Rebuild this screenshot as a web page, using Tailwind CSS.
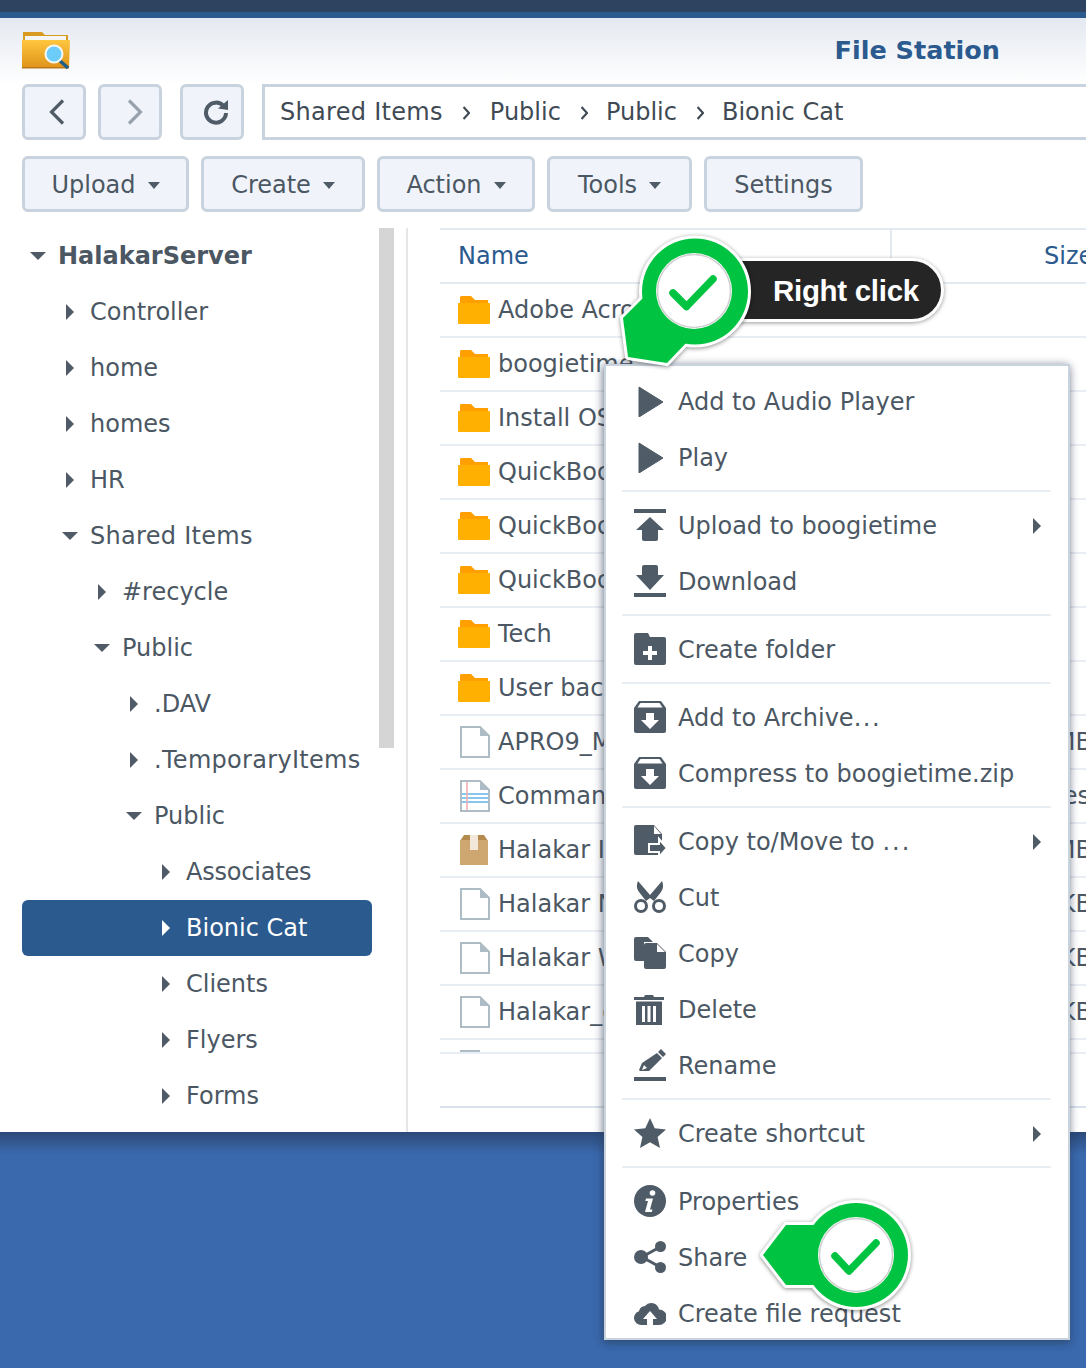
<!DOCTYPE html>
<html lang="en">
<head>
  <meta charset="UTF-8">
  <title>File Station</title>
  <script src="https://cdn.jsdelivr.net/npm/@tailwindcss/browser@4"></script>
</head>
<body class="bg-[#3a69ad]">
<div class="relative w-[1086px] h-[1368px] overflow-hidden bg-[#3a69ad] font-['DejaVu_Sans',sans-serif] text-[24px] text-[#4b5763]">
  <div class="h-[12px] bg-[#2e4360]"></div>
  <div class="h-[6px] bg-[#2b5a8e]"></div>

  <!-- window -->
  <div class="relative bg-white h-[1114px] overflow-hidden">
    <header class="h-[66px] flex items-center justify-between pl-[22px] pr-[86px] bg-linear-to-b from-[#e4e9f0] to-white">
      <svg class="w-[48px] h-[42px] mt-[-2px]" viewBox="0 0 48 42">
        <defs>
          <linearGradient id="fold" x1="0" y1="0" x2="0" y2="1"><stop offset="0" stop-color="#ffc63f"/><stop offset="1" stop-color="#e0951a"/></linearGradient>
        </defs>
        <path d="M1 3h19l3 3h23v10H1z" fill="#d99a22"/>
        <path d="M3 7h41v6H3z" fill="#f4f5f5"/>
        <path d="M0 11h48l-1 27H0z" fill="url(#fold)"/>
        <path d="M0 38h47v1.500H0z" fill="#b9791a"/>
        <path d="M37 31l9 8" stroke="#1f5d86" stroke-width="3.500"/>
        <circle cx="32" cy="25" r="8.500" fill="#6ccdfb" stroke="#f5f7f8" stroke-width="2"/>
      </svg>
      <div class="pb-[2px] font-bold text-[25.5px] text-[#2b5a8e]">File Station</div>
    </header>

    <div class="flex h-[56px] pl-[22px]">
      <button class="w-[64px] h-[56px] flex items-center justify-center rounded-[6px] border-[3px] border-[#c8d3df] bg-[#f0f4fa]">
        <svg class="ml-[6px] w-[16px] h-[26px]" viewBox="0 0 16 26"><path d="M14 1.500L2.500 13 14 24.500" fill="none" stroke="#4f5b66" stroke-width="3.200"/></svg>
      </button>
      <button class="ml-[12px] w-[64px] h-[56px] flex items-center justify-center rounded-[6px] border-[3px] border-[#c8d3df] bg-[#f0f4fa]">
        <svg class="ml-[10px] w-[16px] h-[26px]" viewBox="0 0 16 26"><path d="M2 1.500L13.500 13 2 24.500" fill="none" stroke="#98a2ad" stroke-width="3.200"/></svg>
      </button>
      <button class="ml-[18px] w-[64px] h-[56px] flex items-center justify-center rounded-[6px] border-[3px] border-[#c8d3df] bg-[#f0f4fa]">
        <svg class="ml-[8px] w-[26px] h-[26px]" viewBox="0 0 26 26"><path d="M20.500 7A10 10 0 1 0 23 14" fill="none" stroke="#4f5b66" stroke-width="4"/><path d="M15 9.500L25 1v10z" fill="#4f5b66"/></svg>
      </button>
      <div class="ml-[18px] flex-1 h-[56px] flex items-center gap-[20px] pl-[15px] border-[3px] border-r-0 border-[#c8d3df] bg-white text-[#3f4a54]">
        <span class="tracking-[0.3px]">Shared Items</span>
        <svg class="w-[7px] h-[14px] mt-[1px]" viewBox="0 0 7 14"><path d="M0.500 1l5.500 6-5.500 6" fill="none" stroke="#3f4a54" stroke-width="2.200"/></svg>
        <span>Public</span>
        <svg class="w-[7px] h-[14px] mt-[1px]" viewBox="0 0 7 14"><path d="M0.500 1l5.500 6-5.500 6" fill="none" stroke="#3f4a54" stroke-width="2.200"/></svg>
        <span class="ml-[-2px]">Public</span>
        <svg class="w-[7px] h-[14px] mt-[1px]" viewBox="0 0 7 14"><path d="M0.500 1l5.500 6-5.500 6" fill="none" stroke="#3f4a54" stroke-width="2.200"/></svg>
        <span class="ml-[-2px]">Bionic Cat</span>
      </div>
    </div>

    <div class="flex gap-[12px] h-[56px] mt-[16px] pl-[22px]">
      <button class="w-[167px] pt-[2px] flex items-center justify-center gap-[12px] rounded-[6px] border-[3px] border-[#c8d3df] bg-[#f0f4fa]">Upload <svg class="w-[12px] h-[7px] mt-[1px]" viewBox="0 0 12 7"><path d="M0 0h12L6 7z" fill="#4f5b66"/></svg></button>
      <button class="w-[164px] pt-[2px] flex items-center justify-center gap-[12px] rounded-[6px] border-[3px] border-[#c8d3df] bg-[#f0f4fa]">Create <svg class="w-[12px] h-[7px] mt-[1px]" viewBox="0 0 12 7"><path d="M0 0h12L6 7z" fill="#4f5b66"/></svg></button>
      <button class="w-[158px] pt-[2px] flex items-center justify-center gap-[12px] rounded-[6px] border-[3px] border-[#c8d3df] bg-[#f0f4fa]">Action <svg class="w-[12px] h-[7px] mt-[1px]" viewBox="0 0 12 7"><path d="M0 0h12L6 7z" fill="#4f5b66"/></svg></button>
      <button class="w-[145px] pt-[2px] flex items-center justify-center gap-[12px] rounded-[6px] border-[3px] border-[#c8d3df] bg-[#f0f4fa]">Tools <svg class="w-[12px] h-[7px] mt-[1px]" viewBox="0 0 12 7"><path d="M0 0h12L6 7z" fill="#4f5b66"/></svg></button>
      <button class="w-[159px] pt-[2px] flex items-center justify-center rounded-[6px] border-[3px] border-[#c8d3df] bg-[#f0f4fa]">Settings</button>
    </div>

    <div class="flex h-[920px] mt-[16px]">
      <!-- tree -->
      <aside class="w-[408px] shrink-0 flex items-start pl-[22px] border-r-2 border-[#e6e6e6]">
        <div class="w-[350px]">
          <div class="h-[56px] flex items-center gap-[12px] pl-[8px] font-bold text-[#4b5763]"><svg class="w-[16px] h-[8px]" viewBox="0 0 16 8"><path d="M0 0h16L8 8z" fill="#4f5b66"/></svg>HalakarServer</div>
          <div class="h-[56px] flex items-center pl-[44px] gap-[16px]"><svg class="w-[8px] h-[16px]" viewBox="0 0 8 16"><path d="M0 0l8 8-8 8z" fill="#4f5b66"/></svg>Controller</div>
          <div class="h-[56px] flex items-center pl-[44px] gap-[16px]"><svg class="w-[8px] h-[16px]" viewBox="0 0 8 16"><path d="M0 0l8 8-8 8z" fill="#4f5b66"/></svg>home</div>
          <div class="h-[56px] flex items-center pl-[44px] gap-[16px]"><svg class="w-[8px] h-[16px]" viewBox="0 0 8 16"><path d="M0 0l8 8-8 8z" fill="#4f5b66"/></svg>homes</div>
          <div class="h-[56px] flex items-center pl-[44px] gap-[16px]"><svg class="w-[8px] h-[16px]" viewBox="0 0 8 16"><path d="M0 0l8 8-8 8z" fill="#4f5b66"/></svg>HR</div>
          <div class="h-[56px] flex items-center pl-[40px] gap-[12px]"><svg class="w-[16px] h-[8px]" viewBox="0 0 16 8"><path d="M0 0h16L8 8z" fill="#4f5b66"/></svg><span class="tracking-[0.3px]">Shared Items</span></div>
          <div class="h-[56px] flex items-center pl-[76px] gap-[16px]"><svg class="w-[8px] h-[16px]" viewBox="0 0 8 16"><path d="M0 0l8 8-8 8z" fill="#4f5b66"/></svg>#recycle</div>
          <div class="h-[56px] flex items-center pl-[72px] gap-[12px]"><svg class="w-[16px] h-[8px]" viewBox="0 0 16 8"><path d="M0 0h16L8 8z" fill="#4f5b66"/></svg>Public</div>
          <div class="h-[56px] flex items-center pl-[108px] gap-[16px]"><svg class="w-[8px] h-[16px]" viewBox="0 0 8 16"><path d="M0 0l8 8-8 8z" fill="#4f5b66"/></svg>.DAV</div>
          <div class="h-[56px] flex items-center pl-[108px] gap-[16px] whitespace-nowrap"><svg class="w-[8px] h-[16px]" viewBox="0 0 8 16"><path d="M0 0l8 8-8 8z" fill="#4f5b66"/></svg><span class="tracking-[0.3px]">.TemporaryItems</span></div>
          <div class="h-[56px] flex items-center pl-[104px] gap-[12px]"><svg class="w-[16px] h-[8px]" viewBox="0 0 16 8"><path d="M0 0h16L8 8z" fill="#4f5b66"/></svg>Public</div>
          <div class="h-[56px] flex items-center pl-[140px] gap-[16px]"><svg class="w-[8px] h-[16px]" viewBox="0 0 8 16"><path d="M0 0l8 8-8 8z" fill="#4f5b66"/></svg><span class="tracking-[-0.2px]">Associates</span></div>
          <div class="h-[56px] flex items-center pl-[140px] gap-[16px] rounded-[6px] bg-[#2b5a8e] text-white"><svg class="w-[8px] h-[16px]" viewBox="0 0 8 16"><path d="M0 0l8 8-8 8z" fill="#fff"/></svg>Bionic Cat</div>
          <div class="h-[56px] flex items-center pl-[140px] gap-[16px]"><svg class="w-[8px] h-[16px]" viewBox="0 0 8 16"><path d="M0 0l8 8-8 8z" fill="#4f5b66"/></svg>Clients</div>
          <div class="h-[56px] flex items-center pl-[140px] gap-[16px]"><svg class="w-[8px] h-[16px]" viewBox="0 0 8 16"><path d="M0 0l8 8-8 8z" fill="#4f5b66"/></svg>Flyers</div>
          <div class="h-[56px] flex items-center pl-[140px] gap-[16px]"><svg class="w-[8px] h-[16px]" viewBox="0 0 8 16"><path d="M0 0l8 8-8 8z" fill="#4f5b66"/></svg>Forms</div>
        </div>
        <div class="ml-[7px] w-[15px] h-[520px] bg-[#d5d5d5]"></div>
      </aside>

      <!-- file list -->
      <main class="flex-1 min-w-0 pl-[32px]">
        <div class="h-[56px] flex border-t-2 border-b-2 border-[#e2e9f0] text-[#2b5a8e]">
          <div class="w-[450px] shrink-0 pl-[18px] pt-[8px]">Name</div>
          <div class="w-[2px] h-[28px] shrink-0 bg-[#e2e9f0]"></div>
          <div class="pl-[152px] pt-[8px] shrink-0">Size</div>
        </div>

        <div class="h-[54px] flex items-center border-b-2 border-[#e9eef4] whitespace-nowrap"><svg class="ml-[18px] mr-[8px] w-[32px] h-[28px] shrink-0" viewBox="0 0 32 28"><path d="M3 0h10l4 4h13v5H2V1z" fill="#ff9f00"/><path d="M0 7h32v20a1 1 0 0 1-1 1H1a1 1 0 0 1-1-1z" fill="#ffb000"/></svg><span>Adobe Acro<span class="text-[#f3f4f5]">bat 9 Pro</span></span></div>
        <div class="h-[54px] flex items-center border-b-2 border-[#e9eef4] whitespace-nowrap"><svg class="ml-[18px] mr-[8px] w-[32px] h-[28px] shrink-0" viewBox="0 0 32 28"><path d="M3 0h10l4 4h13v5H2V1z" fill="#ff9f00"/><path d="M0 7h32v20a1 1 0 0 1-1 1H1a1 1 0 0 1-1-1z" fill="#ffb000"/></svg>boogietime</div>
        <div class="h-[54px] flex items-center border-b-2 border-[#e9eef4] whitespace-nowrap"><svg class="ml-[18px] mr-[8px] w-[32px] h-[28px] shrink-0" viewBox="0 0 32 28"><path d="M3 0h10l4 4h13v5H2V1z" fill="#ff9f00"/><path d="M0 7h32v20a1 1 0 0 1-1 1H1a1 1 0 0 1-1-1z" fill="#ffb000"/></svg>Install OS</div>
        <div class="h-[54px] flex items-center border-b-2 border-[#e9eef4] whitespace-nowrap"><svg class="ml-[18px] mr-[8px] w-[32px] h-[28px] shrink-0" viewBox="0 0 32 28"><path d="M3 0h10l4 4h13v5H2V1z" fill="#ff9f00"/><path d="M0 7h32v20a1 1 0 0 1-1 1H1a1 1 0 0 1-1-1z" fill="#ffb000"/></svg>QuickBooks</div>
        <div class="h-[54px] flex items-center border-b-2 border-[#e9eef4] whitespace-nowrap"><svg class="ml-[18px] mr-[8px] w-[32px] h-[28px] shrink-0" viewBox="0 0 32 28"><path d="M3 0h10l4 4h13v5H2V1z" fill="#ff9f00"/><path d="M0 7h32v20a1 1 0 0 1-1 1H1a1 1 0 0 1-1-1z" fill="#ffb000"/></svg>QuickBooks</div>
        <div class="h-[54px] flex items-center border-b-2 border-[#e9eef4] whitespace-nowrap"><svg class="ml-[18px] mr-[8px] w-[32px] h-[28px] shrink-0" viewBox="0 0 32 28"><path d="M3 0h10l4 4h13v5H2V1z" fill="#ff9f00"/><path d="M0 7h32v20a1 1 0 0 1-1 1H1a1 1 0 0 1-1-1z" fill="#ffb000"/></svg>QuickBooks</div>
        <div class="h-[54px] flex items-center border-b-2 border-[#e9eef4] whitespace-nowrap"><svg class="ml-[18px] mr-[8px] w-[32px] h-[28px] shrink-0" viewBox="0 0 32 28"><path d="M3 0h10l4 4h13v5H2V1z" fill="#ff9f00"/><path d="M0 7h32v20a1 1 0 0 1-1 1H1a1 1 0 0 1-1-1z" fill="#ffb000"/></svg>Tech</div>
        <div class="h-[54px] flex items-center border-b-2 border-[#e9eef4] whitespace-nowrap"><svg class="ml-[18px] mr-[8px] w-[32px] h-[28px] shrink-0" viewBox="0 0 32 28"><path d="M3 0h10l4 4h13v5H2V1z" fill="#ff9f00"/><path d="M0 7h32v20a1 1 0 0 1-1 1H1a1 1 0 0 1-1-1z" fill="#ffb000"/></svg>User backup</div>

        <div class="h-[54px] flex items-center justify-between border-b-2 border-[#e9eef4] whitespace-nowrap"><div class="flex items-center"><svg class="ml-[20px] mr-[8px] w-[30px] h-[32px] shrink-0" viewBox="0 0 30 32"><path d="M1 1h19l9 9v21H1z" fill="#fff" stroke="#aebcc6" stroke-width="2"/><path d="M20 0l10 10H20z" fill="#aebcc6"/></svg>APRO9_Manual</div><span class="mr-[-6px]">1 MB</span></div>
        <div class="h-[54px] flex items-center justify-between border-b-2 border-[#e9eef4] whitespace-nowrap"><div class="flex items-center"><svg class="ml-[20px] mr-[8px] w-[30px] h-[32px] shrink-0" viewBox="0 0 30 32"><path d="M1 1h19l9 9v21H1z" fill="#fff" stroke="#aebcc6" stroke-width="2"/><path d="M20 0l10 10H20z" fill="#aebcc6"/><path d="M2 14h26M2 18h26M2 22h26" stroke="#62b5e5" stroke-width="1.600"/><path d="M7 2v28" stroke="#f3aeb0" stroke-width="1.600"/></svg>Commands</div><span class="mr-[-4px]">bytes</span></div>
        <div class="h-[54px] flex items-center justify-between border-b-2 border-[#e9eef4] whitespace-nowrap"><div class="flex items-center"><svg class="ml-[20px] mr-[10px] w-[28px] h-[30px] shrink-0" viewBox="0 0 28 30"><path d="M4 0h20l4 6H0z" fill="#b58a4f"/><path d="M0 5h28v25H0z" fill="#cda670"/><path d="M10 0h8v15h-8z" fill="#f1e7da"/></svg>Halakar Inst</div><span class="mr-[-6px]">1 MB</span></div>
        <div class="h-[54px] flex items-center justify-between border-b-2 border-[#e9eef4] whitespace-nowrap"><div class="flex items-center"><svg class="ml-[20px] mr-[8px] w-[30px] h-[32px] shrink-0" viewBox="0 0 30 32"><path d="M1 1h19l9 9v21H1z" fill="#fff" stroke="#aebcc6" stroke-width="2"/><path d="M20 0l10 10H20z" fill="#aebcc6"/></svg>Halakar Notes</div><span class="mr-[-6px]">8 KB</span></div>
        <div class="h-[54px] flex items-center justify-between border-b-2 border-[#e9eef4] whitespace-nowrap"><div class="flex items-center"><svg class="ml-[20px] mr-[8px] w-[30px] h-[32px] shrink-0" viewBox="0 0 30 32"><path d="M1 1h19l9 9v21H1z" fill="#fff" stroke="#aebcc6" stroke-width="2"/><path d="M20 0l10 10H20z" fill="#aebcc6"/></svg>Halakar Web</div><span class="mr-[-6px]">8 KB</span></div>
        <div class="h-[54px] flex items-center justify-between border-b-2 border-[#e9eef4] whitespace-nowrap"><div class="flex items-center"><svg class="ml-[20px] mr-[8px] w-[30px] h-[32px] shrink-0" viewBox="0 0 30 32"><path d="M1 1h19l9 9v21H1z" fill="#fff" stroke="#aebcc6" stroke-width="2"/><path d="M20 0l10 10H20z" fill="#aebcc6"/></svg>Halakar_old</div><span class="mr-[-6px]">8 KB</span></div>
        <div class="h-[14px] overflow-hidden border-b-2 border-[#e9eef4]"><div class="ml-[20px] mt-[10px] w-[20px] h-[2px] bg-[#aebcc6]"></div></div>
        <div class="h-[54px] border-b-2 border-[#d9e2ec]"></div>
      </main>
    </div>
  </div>
  <div class="h-[22px] bg-linear-to-b from-[#2c4a78] to-[#3a69ad]"></div>

  <!-- context menu -->
  <div class="absolute left-[604px] top-[364px] w-[466px] h-[976px] overflow-hidden border-2 border-[#c9d3de] bg-white pt-[7px] shadow-[-2px_0_8px_rgba(60,75,95,0.35),0_3px_8px_rgba(30,45,70,0.45)] whitespace-nowrap">
    <div class="h-[56px] pt-[2px] flex items-center pl-[28px] gap-[12px]"><svg class="mt-[-2px] w-[32px] h-[32px]" viewBox="0 0 32 32"><path d="M5 2l24 15L5 32z" fill="#4f5b66" stroke="#4f5b66" stroke-linejoin="round"/></svg>Add to Audio Player</div>
    <div class="h-[56px] pt-[2px] flex items-center pl-[28px] gap-[12px]"><svg class="mt-[-2px] w-[32px] h-[32px]" viewBox="0 0 32 32"><path d="M5 2l24 15L5 32z" fill="#4f5b66" stroke="#4f5b66" stroke-linejoin="round"/></svg>Play</div>
    <div class="h-[2px] my-[5px] mx-[16px] w-[429px] bg-[#e9eef4]"></div>
    <div class="h-[56px] pt-[2px] flex items-center pl-[28px] gap-[12px] relative"><svg class="mt-[-2px] w-[32px] h-[32px]" viewBox="0 0 32 32"><path d="M0 0h32v4H0z" fill="#4f5b66"/><path d="M16 8L30 21H24v9a2 2 0 0 1-2 2H10a2 2 0 0 1-2-2v-9H2z" fill="#4f5b66"/></svg>Upload to boogietime<svg class="absolute left-[427px] w-[8px] h-[16px]" viewBox="0 0 8 16"><path d="M0 0l8 8-8 8z" fill="#4f5b66"/></svg></div>
    <div class="h-[56px] pt-[2px] flex items-center pl-[28px] gap-[12px]"><svg class="mt-[-2px] w-[32px] h-[32px]" viewBox="0 0 32 32"><path d="M10 0h12a2 2 0 0 1 2 2v8h6L16 25 2 10h6V2a2 2 0 0 1 2-2z" fill="#4f5b66"/><path d="M0 28h32v4H0z" fill="#4f5b66"/></svg>Download</div>
    <div class="h-[2px] my-[5px] mx-[16px] w-[429px] bg-[#e9eef4]"></div>
    <div class="h-[56px] pt-[2px] flex items-center pl-[28px] gap-[12px]"><svg class="mt-[-2px] w-[32px] h-[32px]" viewBox="0 0 32 32"><path d="M2 0h12l2 4h14a2 2 0 0 1 2 2v24a2 2 0 0 1-2 2H2a2 2 0 0 1-2-2V2a2 2 0 0 1 2-2z" fill="#4f5b66"/><path d="M14 13h4v5h5v4h-5v5h-4v-5H9v-4h5z" fill="#fff"/></svg>Create folder</div>
    <div class="h-[2px] my-[5px] mx-[16px] w-[429px] bg-[#e9eef4]"></div>
    <div class="h-[56px] pt-[2px] flex items-center pl-[28px] gap-[12px]"><svg class="mt-[-2px] w-[32px] h-[32px]" viewBox="0 0 32 32"><path d="M5 0h22l5 7v23a2 2 0 0 1-2 2H2a2 2 0 0 1-2-2V7z" fill="#4f5b66"/><path d="M6.500 2h19l3 4.500h-25z" fill="#fff"/><path d="M12 12h8v7h5l-9 9-9-9h5z" fill="#fff"/></svg><span>Add to Archive<span class="tracking-[1.5px]">...</span></span></div>
    <div class="h-[56px] pt-[2px] flex items-center pl-[28px] gap-[12px]"><svg class="mt-[-2px] w-[32px] h-[32px]" viewBox="0 0 32 32"><path d="M5 0h22l5 7v23a2 2 0 0 1-2 2H2a2 2 0 0 1-2-2V7z" fill="#4f5b66"/><path d="M6.500 2h19l3 4.500h-25z" fill="#fff"/><path d="M12 12h8v7h5l-9 9-9-9h5z" fill="#fff"/></svg>Compress to boogietime.zip</div>
    <div class="h-[2px] my-[5px] mx-[16px] w-[429px] bg-[#e9eef4]"></div>
    <div class="h-[56px] pt-[2px] flex items-center pl-[28px] gap-[12px] relative"><svg class="mt-[-2px] w-[32px] h-[32px]" viewBox="0 0 32 32"><path d="M2 0h18l8 9v21H2a2 2 0 0 1-2-2V2a2 2 0 0 1 2-2z" fill="#4f5b66"/><path d="M20 1v8h7z" fill="#fff"/><path d="M15 19h10v-5l8 9-8 9v-5H15z" fill="#4f5b66" stroke="#fff" stroke-width="2"/></svg><span>Copy to/Move to <span class="tracking-[2px]">...</span></span><svg class="absolute left-[427px] w-[8px] h-[16px]" viewBox="0 0 8 16"><path d="M0 0l8 8-8 8z" fill="#4f5b66"/></svg></div>
    <div class="h-[56px] pt-[2px] flex items-center pl-[28px] gap-[12px]"><svg class="mt-[-2px] w-[32px] h-[32px]" viewBox="0 0 32 32"><path d="M4 0l12 14L28 0c2 5 1 8-1 11L20 20l-4-3-4 3L5 11C3 8 2 5 4 0z" fill="#4f5b66"/><circle cx="7" cy="25" r="5.500" fill="none" stroke="#4f5b66" stroke-width="3"/><circle cx="25" cy="25" r="5.500" fill="none" stroke="#4f5b66" stroke-width="3"/></svg>Cut</div>
    <div class="h-[56px] pt-[2px] flex items-center pl-[28px] gap-[12px]"><svg class="mt-[-2px] w-[32px] h-[32px]" viewBox="0 0 32 32"><path d="M2 0h12l5 5H10v19H2a2 2 0 0 1-2-2V2a2 2 0 0 1 2-2z" fill="#4f5b66"/><path d="M12 6h11l9 9v15a2 2 0 0 1-2 2H12a2 2 0 0 1-2-2V8a2 2 0 0 1 2-2z" fill="#4f5b66"/><path d="M23 7v8h8z" fill="#fff"/></svg>Copy</div>
    <div class="h-[56px] pt-[2px] flex items-center pl-[28px] gap-[12px]"><svg class="mt-[-2px] w-[32px] h-[32px]" viewBox="0 0 32 32"><path d="M0 4h10l1-2h8l1 2h10v3H0z" fill="#4f5b66"/><path d="M2 8.500h26V32a1.500 1.500 0 0 1-1.500 1.500h-23A1.500 1.500 0 0 1 2 32z" fill="#4f5b66"/><path d="M8 13h3v16H8zM13.500 13h3v16h-3zM19 13h3v16h-3z" fill="#fff"/></svg>Delete</div>
    <div class="h-[56px] pt-[2px] flex items-center pl-[28px] gap-[12px]"><svg class="mt-[-2px] w-[32px] h-[32px]" viewBox="0 0 32 32"><path d="M27 0l5 5-3 3-5-5zM23 4l5 5-13 13H6l-1-1 3-7z" fill="#4f5b66"/><path d="M8 21l2-5 3 3z" fill="#fff"/><path d="M0 28h32v4H0z" fill="#4f5b66"/></svg>Rename</div>
    <div class="h-[2px] my-[5px] mx-[16px] w-[429px] bg-[#e9eef4]"></div>
    <div class="h-[56px] pt-[2px] flex items-center pl-[28px] gap-[12px] relative"><svg class="mt-[-2px] w-[32px] h-[32px]" viewBox="0 0 32 32"><path d="M16 1l4.700 10.200L32 12.500l-8.400 7.600L26 31l-10-5.700L6 31l2.400-10.900L0 12.500l11.300-1.300z" fill="#4f5b66"/></svg>Create shortcut<svg class="absolute left-[427px] w-[8px] h-[16px]" viewBox="0 0 8 16"><path d="M0 0l8 8-8 8z" fill="#4f5b66"/></svg></div>
    <div class="h-[2px] my-[5px] mx-[16px] w-[429px] bg-[#e9eef4]"></div>
    <div class="h-[56px] pt-[2px] flex items-center pl-[28px] gap-[12px]"><svg class="mt-[-2px] w-[32px] h-[32px]" viewBox="0 0 32 32"><circle cx="16" cy="16" r="16" fill="#4f5b66"/><circle cx="18.500" cy="8" r="2.800" fill="#fff"/><path d="M12 13.500h7l-3 11h2.500l-.8 2.500H11l3-11h-2.700z" fill="#fff"/></svg>Properties</div>
    <div class="h-[56px] pt-[2px] flex items-center pl-[28px] gap-[12px]"><svg class="mt-[-2px] w-[32px] h-[32px]" viewBox="0 0 32 32"><path d="M26 6L8 16l18 10" fill="none" stroke="#4f5b66" stroke-width="3"/><circle cx="26.500" cy="5.500" r="5.500" fill="#4f5b66"/><circle cx="26.500" cy="26.500" r="5.500" fill="#4f5b66"/><circle cx="7" cy="16" r="7" fill="#4f5b66"/></svg>Share</div>
    <div class="h-[56px] pt-[2px] flex items-center pl-[28px] gap-[12px]"><svg class="mt-[-2px] w-[32px] h-[32px]" viewBox="0 0 32 32"><path d="M7 28a7 7 0 0 1-2-13.700 6 6 0 0 1 6-5.300 8 8 0 0 1 14 3.500A7.500 7.500 0 0 1 25 28z" fill="#4f5b66"/><path d="M16 14l7 8h-4v6h-6v-6H9z" fill="#fff"/></svg>Create file request</div>
  </div>

  <!-- right click callout -->
  <div class="absolute left-[700px] top-[258px] w-[244px] h-[64px] pl-[70px] pt-[2px] flex items-center rounded-full border-[3px] border-white bg-[#252525] shadow-[0_1px_4px_rgba(0,0,0,0.4)] font-['Liberation_Sans',sans-serif] font-bold text-[29.5px] tracking-[-0.3px] text-white">Right click</div>
  <svg class="absolute left-[600px] top-[230px] w-[160px] h-[145px] drop-shadow-[0_1px_2px_rgba(0,0,0,0.45)]" viewBox="600 230 160 145">
    <path d="M643 298L623 318l5 39 39 6 20-21z" fill="#fff" stroke="#fff" stroke-width="6" stroke-linejoin="round"/>
    <circle cx="695" cy="291.500" r="53" fill="#fff" stroke="#fff" stroke-width="6"/>
    <path d="M643 298L623 318l5 39 39 6 20-21z" fill="#00c441"/>
    <circle cx="695" cy="291.500" r="53" fill="#00c441"/>
    <circle cx="694" cy="291" r="38" fill="#fff"/>
    <circle cx="694" cy="291" r="36.500" fill="none" stroke="#cfcfcf" stroke-width="1.500"/>
    <path d="M673 293l13.500 13.500L713 279" fill="none" stroke="#00c441" stroke-width="7.500" stroke-linecap="round" stroke-linejoin="round"/>
  </svg>

  <!-- share callout -->
  <svg class="absolute left-[750px] top-[1195px] w-[170px] h-[120px] drop-shadow-[0_1px_2px_rgba(0,0,0,0.45)]" viewBox="750 1195 170 120">
    <path d="M763 1255l23-30h40v60h-40z" fill="#fff" stroke="#fff" stroke-width="6" stroke-linejoin="round"/>
    <circle cx="856" cy="1255" r="52" fill="#fff" stroke="#fff" stroke-width="6"/>
    <path d="M763 1255l23-30h40v60h-40z" fill="#00c441"/>
    <circle cx="856" cy="1255" r="52" fill="#00c441"/>
    <circle cx="856" cy="1255" r="38" fill="#fff"/>
    <circle cx="856" cy="1255" r="36.500" fill="none" stroke="#cfcfcf" stroke-width="1.500"/>
    <path d="M835 1256l14 15 27-28" fill="none" stroke="#00c441" stroke-width="7.500" stroke-linecap="round" stroke-linejoin="round"/>
  </svg>
</div>
</body>
</html>
